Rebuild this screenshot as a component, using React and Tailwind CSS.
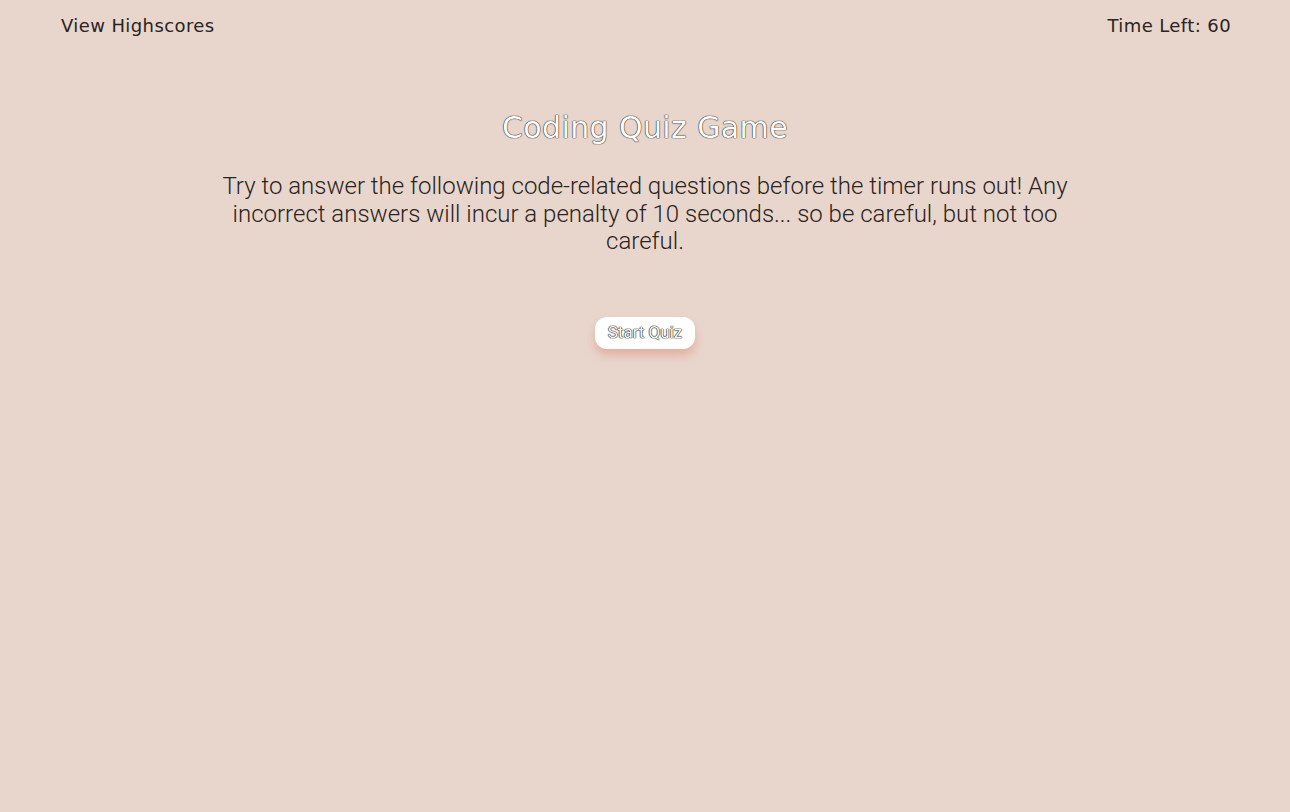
import React from "react";

export default function App() {
  return (
    <div className="min-h-[812px] w-full bg-[#e8d6cd] text-[#222] font-['Roboto',sans-serif]">
      {/* Header */}
      <header className="flex items-center justify-between pl-[61px] pr-[59px] pt-[12px] font-['DejaVu_Sans',sans-serif] text-[18px] tracking-[0.4px]">
        <a className="cursor-pointer text-[#2a2320]">View Highscores</a>
        <div className="text-[#2a2320]">Time Left: 60</div>
      </header>

      {/* Intro */}
      <main className="flex flex-col items-center pt-[66px] text-center">
        <h1 className="font-['DejaVu_Sans',sans-serif] text-[30px] font-normal tracking-[0.4px] text-white [text-shadow:0_0_1px_#000,0_0_1px_#000]">
          Coding Quiz Game
        </h1>
        <p className="mt-[23px] w-[860px] text-[24px] font-light leading-[27.5px] text-[#2a2320]">
          Try to answer the following code-related questions before the timer runs out! Any incorrect answers will incur a penalty of 10 seconds... so be careful, but not too careful.
        </p>
        <button className="mt-[61px] h-[32px] rounded-[12px] bg-white px-[13px] text-[17px] text-white [text-shadow:0_0_1px_#111,0_0_1px_#111,0_0_1px_#111] shadow-[0_6px_10px_rgba(225,140,120,0.55)]">
          Start Quiz
        </button>
      </main>
    </div>
  );
}
